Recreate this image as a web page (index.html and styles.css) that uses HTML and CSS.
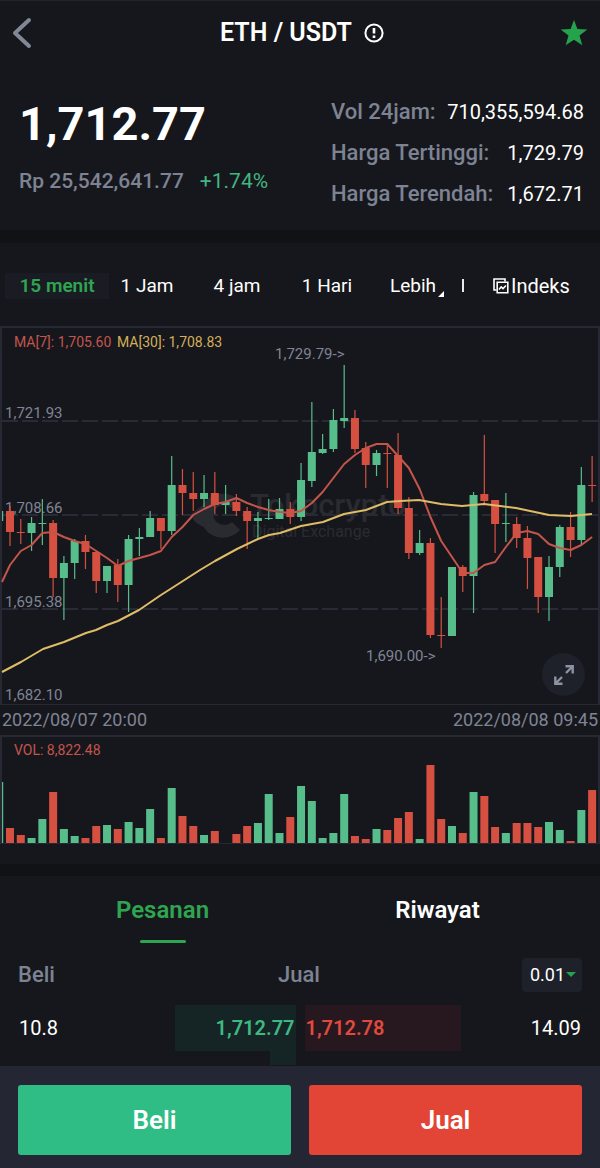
FILE: index.html
```html
<!DOCTYPE html>
<html lang="id">
<head>
<meta charset="utf-8">
<meta name="viewport" content="width=device-width, initial-scale=1">
<title>ETH / USDT</title>
<link rel="stylesheet" href="styles.css">
</head>
<body>
<div class="app">
  <header class="topbar">
    <button class="icon-btn" type="button" aria-label="Kembali">
      <svg width="20" height="32" viewBox="0 0 20 32"><path d="M17 3 3 16 17 29" fill="none" stroke="#808797" stroke-width="4" stroke-linecap="round" stroke-linejoin="round"/></svg>
    </button>
    <h1 class="pair">ETH / USDT
      <svg width="20" height="20" viewBox="0 0 20 20"><circle cx="10" cy="10" r="8.6" fill="none" stroke="#fff" stroke-width="2"/><path d="M10 5v5.6M10 12.4v2.6" stroke="#fff" stroke-width="2.6"/></svg>
    </h1>
    <button class="icon-btn" type="button" aria-label="Favorit">
      <svg width="28" height="28" viewBox="0 0 28 28"><path d="M14 1l3.4 9.1 9.9.4-7.8 6 2.8 9.7L14 20.8 5.7 26.2l2.8-9.7-7.8-6 9.9-.4z" fill="#25a24c"/></svg>
    </button>
  </header>

  <section class="ticker">
    <div class="last">
      <div class="price">1,712.77</div>
      <div class="fiat"><span>Rp 25,542,641.77</span><span class="up">+1.74%</span></div>
    </div>
    <dl class="stats">
      <div><dt>Vol 24jam:</dt><dd>710,355,594.68</dd></div>
      <div><dt>Harga Tertinggi:</dt><dd>1,729.79</dd></div>
      <div><dt>Harga Terendah:</dt><dd>1,672.71</dd></div>
    </dl>
  </section>

  <div class="band"></div>

  <nav class="intervals">
    <button class="interval active" type="button">15 menit</button>
    <button class="interval" type="button">1 Jam</button>
    <button class="interval" type="button">4 jam</button>
    <button class="interval" type="button">1 Hari</button>
    <button class="interval" type="button">Lebih<svg class="corner" width="6" height="6" viewBox="0 0 6 6"><path d="M6 0v6H0z" fill="#fff"/></svg></button>
    <div class="tools">
      <span class="divider"></span>
      <button class="interval index" type="button">
        <svg width="16" height="16" viewBox="0 0 16 16" fill="none" stroke="#fff"><path d="M3.500 12H1V1h11v2.500" stroke-width="1.600"/><path d="M4.200 4.200h10.600v10.600H4.200z" stroke-width="1.600"/><path d="M6 11.500l2.200-2.600 1.800 1.700L13 7.500" stroke-width="1.500"/></svg>Indeks
      </button>
    </div>
  </nav>

  <section class="chart">
    <svg class="plot" id="candles" viewBox="0 0 600 376" role="img" aria-label="Grafik harga">
      <g class="grid">
        <path d="M2 93H598M2 187H598M2 281H598"/>
      </g>
      <g class="watermark">
        <path d="M238 171C226 162 209 165 203 177L191 186C193 194 199 197 204 199C210 211 229 214 240 202L232 194C225 200 214 196 213 187C214 178 224 174 231 180Z"/>
        <text x="250" y="188" class="wm-name">Tokocrypto</text>
        <text x="252" y="209" class="wm-sub">Digital Exchange</text>
      </g>
      <g class="axis">
        <text x="5" y="90">1,721.93</text>
        <text x="5" y="185">1,708.66</text>
        <text x="5" y="279">1,695.38</text>
        <text x="5" y="372">1,682.10</text>
        <text x="275" y="31">1,729.79-&gt;</text>
        <text x="366" y="333">1,690.00-&gt;</text>
      </g>
      <text x="14" y="19" class="legend ma7">MA[7]: 1,705.60</text>
      <text x="117" y="19" class="legend ma30">MA[30]: 1,708.83</text>
    </svg>
    <button class="expand" type="button" aria-label="Layar penuh">
      <svg width="22" height="22" viewBox="0 0 22 22" fill="none" stroke="#8b93a3" stroke-width="2.400"><path d="M12.500 2.300H19.700V9.500M19.500 2.500l-6.500 6.500M9.500 19.700H2.300V12.500M2.500 19.500l6.500-6.500"/></svg>
    </button>
  </section>
  <div class="dates"><span>2022/08/07 20:00</span><span>2022/08/08 09:45</span></div>
  <section class="chart">
    <svg class="plot" id="volume" viewBox="0 0 600 106" role="img" aria-label="Volume">
      <text x="14" y="18" class="legend ma7">VOL: 8,822.48</text>
    </svg>
  </section>

  <div class="band after-chart"></div>

  <nav class="tabs">
    <button class="tab active" type="button">Pesanan</button>
    <button class="tab" type="button">Riwayat</button>
  </nav>

  <section class="book">
    <div class="book-head">
      <span>Beli</span>
      <label for="step">Jual</label>
      <span class="step">
        <select id="step"><option>0.01</option><option>0.1</option><option>1</option></select>
        <svg width="10" height="6" viewBox="0 0 10 6"><path d="M0 0h10L5 5z" fill="#25a24c"/></svg>
      </span>
    </div>
    <div class="book-row">
      <div class="side bid"><i class="depth" style="width:43.500%"></i><span>10.8</span><b>1,712.77</b></div>
      <div class="side ask"><i class="depth" style="width:56.500%"></i><b>1,712.78</b><span>14.09</span></div>
    </div>
    <div class="book-row next">
      <div class="side bid"><i class="depth" style="width:9.300%"></i></div>
      <div class="side ask"></div>
    </div>
  </section>

  <footer class="actions">
    <button class="trade buy" type="button">Beli</button>
    <button class="trade sell" type="button">Jual</button>
  </footer>
</div>
<script src="chart.js"></script>
</body>
</html>
```

FILE: styles.css
```css
* { box-sizing: border-box; }

body {
  margin: 0;
  background: #16171c;
  color: #fff;
  font-family: Roboto, "Liberation Sans", sans-serif;
  font-size: 20px;
  line-height: 24px;
}

button {
  border: 0;
  padding: 0;
  background: none;
  color: inherit;
  font: inherit;
  cursor: pointer;
}

svg { display: block; }

.app {
  display: flex;
  flex-direction: column;
  min-height: 100vh;
  border-top: 1px solid #22242b;
}

.topbar {
  display: grid;
  grid-template-columns: 32px 1fr 28px;
  align-items: center;
  height: 64px;
  padding: 0 12px;
}

.pair {
  display: flex;
  align-items: center;
  justify-content: center;
  gap: 12px;
  margin: 0;
  font-size: 25px;
  font-weight: 600;
  line-height: 32px;
}

.ticker {
  display: flex;
  justify-content: space-between;
  height: 165px;
  padding: 27px 16px 0 19px;
}

.price {
  font-size: 47px;
  font-weight: 700;
  line-height: 64px;
}

.fiat {
  display: flex;
  gap: 16px;
  padding-top: 13px;
  color: #7d8393;
  font-size: 21px;
  font-weight: 500;
}

.up {
  color: #43b581;
  font-weight: 400;
}

.stats {
  display: flex;
  flex-direction: column;
  gap: 17px;
  width: 253px;
  margin: 0;
  padding-top: 8px;
}

.stats div {
  display: flex;
  justify-content: space-between;
  white-space: nowrap;
}

.stats dt {
  color: #7d8393;
  font-size: 22px;
  font-weight: 500;
}

.stats dd { margin: 0; }

.band {
  height: 13px;
  background: #111216;
}

.intervals {
  display: grid;
  grid-template-columns: repeat(5, 15fr) 23fr;
  align-items: center;
  height: 83px;
  padding: 2px 0 0 12px;
  font-size: 19px;
}

.interval {
  display: flex;
  align-items: center;
  justify-content: center;
  height: 26px;
}

.interval.active {
  margin: 0 -7px;
  background: #191c22;
  color: #2fa551;
  font-weight: 600;
}

.corner {
  align-self: flex-end;
  margin: 0 0 2px 2px;
}

.tools {
  display: flex;
  align-items: center;
  gap: 29px;
}

.divider {
  width: 2px;
  height: 13px;
  background: #e8e9ec;
}

.index {
  gap: 2px;
  font-size: 20px;
}

.chart {
  position: relative;
  border-top: 2px solid #262833;
  border-bottom: 1px solid #262833;
}

.plot {
  width: 100%;
  height: auto;
}

.frame { fill: #262833; }

.grid path {
  fill: none;
  stroke: #282a36;
  stroke-width: 2;
  stroke-dasharray: 16 4;
}

.axis {
  fill: #7f8494;
  font-size: 15px;
}

.legend { font-size: 14px; }

.legend.ma7 { fill: #c3554b; }
.legend.ma30 { fill: #d4ae5a; }

.watermark { fill: #2a2b31; }

.wm-name {
  font-size: 31px;
  font-weight: 500;
}

.wm-sub { font-size: 16px; }

.up-bar { fill: #56bd8b; }
.down-bar { fill: #d55040; }

.line {
  fill: none;
  stroke-width: 2;
  stroke-linejoin: round;
}

.line.ma7 { stroke: #c3554b; }
.line.ma30 { stroke: #dfbc66; }

.expand {
  position: absolute;
  right: 15px;
  bottom: 8px;
  display: grid;
  place-items: center;
  width: 43px;
  height: 43px;
  border-radius: 50%;
  background: #1e2129;
}

.dates {
  display: flex;
  justify-content: space-between;
  padding: 3px 2px;
  color: #7f8494;
  font-size: 18px;
}

.after-chart {
  margin-top: 20px;
  height: 12px;
}

.tabs {
  display: grid;
  grid-template-columns: 1fr 1fr;
  padding: 18px 25px 0;
}

.tab {
  display: flex;
  flex-direction: column;
  align-items: center;
  gap: 14px;
  font-size: 24px;
  font-weight: 600;
  line-height: 32px;
}

.tab::after {
  content: "";
  width: 46px;
  height: 3px;
  border-radius: 2px;
}

.tab.active { color: #2fa551; }
.tab.active::after { background: #2fa551; }

.book {
  flex: 1;
  padding: 15px 18px 0;
}

.book-head {
  display: grid;
  grid-template-columns: 260fr 244fr 60px;
  align-items: center;
  height: 34px;
  color: #7d8393;
  font-size: 22px;
  font-weight: 500;
}

.step {
  display: flex;
  align-items: center;
  height: 34px;
  padding: 0 6px 0 8px;
  border-radius: 4px;
  background: #1e2129;
}

.step select {
  flex: 1;
  min-width: 0;
  border: 0;
  padding: 0;
  appearance: none;
  background: none;
  color: #fff;
  font: 400 18px/24px Roboto, "Liberation Sans", sans-serif;
}

.book-row {
  display: grid;
  grid-template-columns: 1fr 1fr;
  gap: 9px;
  height: 46px;
  margin-top: 13px;
}

.book-row.next {
  height: 14px;
  margin-top: 0;
}

.side {
  position: relative;
  display: flex;
  align-items: center;
  justify-content: space-between;
  padding: 0 1px;
}

.side span,
.side b { position: relative; }

.side b { font-weight: 600; }

.depth {
  position: absolute;
  top: 0;
  bottom: 0;
}

.bid b { color: #3fb984; }
.ask b { color: #e04a3e; }

.bid .depth {
  right: 0;
  background: #152424;
}

.ask .depth {
  left: 0;
  background: #27171e;
}

.actions {
  position: sticky;
  bottom: 0;
  display: grid;
  grid-template-columns: 1fr 1fr;
  gap: 18px;
  padding: 19px 18px 13px;
  background: #242733;
}

.trade {
  height: 70px;
  border-radius: 3px;
  font-size: 26px;
  font-weight: 600;
}

.buy { background: #2fbd85; }
.sell { background: #e24536; }
```

FILE: chart.js
```js
// Each candle: direction, high, body top, body bottom, low, volume height.
const candles = [
  ["u",184,184,194,194,61],["d",179,184,205,219,15],["d",192,205,206,217,8],["u",190,196,206,224,5],
  ["u",172,196,197,218,24],["d",193,196,251,270,51],["u",229,236,251,293,14],["u",212,214,236,252,7],
  ["d",208,214,225,242,5],["d",224,225,254,266,17],["u",239,239,254,266,18],["d",232,238,258,275,14],
  ["u",208,212,258,285,21],["u",201,210,212,229,15],["u",184,191,210,210,34],["d",191,191,204,222,5],
  ["u",129,158,204,208,55],["d",142,158,166,188,27],["d",145,166,172,184,17],["u",148,166,172,180,8],
  ["d",145,166,178,187,12],["u",158,175,178,187,0],["d",167,175,184,189,9],["d",180,184,194,222,17],
  ["u",185,191,194,212,20],["u",172,191,192,193,49],["u",171,182,192,192,10],["d",175,182,190,197,26],
  ["u",136,153,190,194,57],["u",75,125,154,160,42],["u",107,122,126,127,5],["u",82,93,122,125,10],
  ["u",38,91,94,101,49],["d",83,91,122,126,7],["d",115,121,138,161,4],["u",123,126,138,149,14],
  ["d",117,126,127,161,13],["d",106,128,181,187,25],["d",170,181,226,232,31],["u",203,216,226,228,4],
  ["d",211,216,308,311,78],["d",270,308,309,321,24],["u",240,240,309,309,17],["d",238,240,249,265,10],
  ["u",165,168,249,286,51],["d",108,167,174,177,47],["d",173,173,197,226,16],["u",166,196,197,215,10],
  ["d",190,197,211,221,20],["d",199,211,231,262,20],["d",230,230,270,286,16],["u",229,240,270,294,21],
  ["u",198,200,240,250,13],["d",185,200,213,230,2],["u",140,158,213,217,33],["d",129,158,159,175,53]
];

const ma7 = [255,238,224,218,206,205,210,214,217,224,231,239,234,231,228,224,210,200,188,182,177,175,171,176,
  180,183,185,186,184,176,165,151,137,128,121,117,117,129,141,162,190,214,230,246,246,238,235,220,206,204,
  207,217,221,223,218,210];

const ma30 = [[2,345],[21,335],[43,322],[64,315],[86,306],[96,303],[107,298],[118,294],[139,283],[161,268],
  [172,261],[200,243],[215,234],[237,222],[258,212],[269,208],[280,206],[301,199],[323,195],[344,187],
  [366,183],[387,175],[400,174],[419,173],[441,177],[462,179],[484,177],[516,181],[549,188],[571,189],[592,187]];

const STEP = 10.78;
const BAR = 8;
const LEFT = 2;
const centre = i => 10 + (i - 1) * STEP;

function add(parent, tag, attrs) {
  const el = document.createElementNS("http://www.w3.org/2000/svg", tag);
  for (const key in attrs) el.setAttribute(key, attrs[key]);
  parent.appendChild(el);
}

function bar(parent, cls, x, y, width, height) {
  const start = Math.max(LEFT, x);
  add(parent, "rect", { class: cls, x: start, y: y, width: x + width - start, height: height });
}

function frame(svg, height) {
  add(svg, "rect", { class: "frame", x: 0, y: 0, width: 2, height: height });
  add(svg, "rect", { class: "frame", x: 598, y: 0, width: 2, height: height });
}

const price = document.getElementById("candles");
const volume = document.getElementById("volume");
const FLOOR = 106;

frame(price, 376);
frame(volume, 106);

candles.forEach(([dir, high, top, bottom, low, vol], i) => {
  const cls = dir === "u" ? "up-bar" : "down-bar";
  const x = centre(i);
  // Plot area starts one pixel below the frame line.
  if (i > 0) bar(price, cls, x - 0.6, high - 1, 1.2, low - high);
  bar(price, cls, x - BAR / 2, top - 1, BAR, bottom - top);
  bar(volume, cls, x - BAR / 2, FLOOR - vol, BAR, vol);
});

const points = list => list.map(p => p.join(",")).join(" ");
add(price, "polyline", { class: "line ma7", points: points(ma7.map((y, i) => [Math.max(LEFT, centre(i)), y - 1])) });
add(price, "polyline", { class: "line ma30", points: points(ma30.map(([x, y]) => [x, y - 1])) });
```
